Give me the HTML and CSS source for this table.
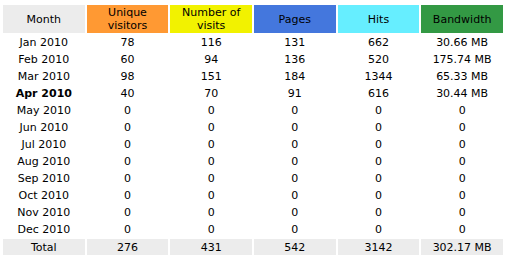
FILE: index.html
```html
<!DOCTYPE html>
<html>
<head>
<meta charset="utf-8">
<link rel="stylesheet" href="styles.css">
</head>
<body>
<table class="hist">
<thead>
<tr>
<th class="h-month">Month</th>
<th class="h-u">Unique<br>visitors</th>
<th class="h-v">Number of<br>visits</th>
<th class="h-p">Pages</th>
<th class="h-h">Hits</th>
<th class="h-k">Bandwidth</th>
</tr>
</thead>
<tbody>
<tr><td>Jan 2010</td><td>78</td><td>116</td><td>131</td><td>662</td><td>30.66 MB</td></tr>
<tr><td>Feb 2010</td><td>60</td><td>94</td><td>136</td><td>520</td><td>175.74 MB</td></tr>
<tr><td>Mar 2010</td><td>98</td><td>151</td><td>184</td><td>1344</td><td>65.33 MB</td></tr>
<tr><td class="cur">Apr 2010</td><td>40</td><td>70</td><td>91</td><td>616</td><td>30.44 MB</td></tr>
<tr><td>May 2010</td><td>0</td><td>0</td><td>0</td><td>0</td><td>0</td></tr>
<tr><td>Jun 2010</td><td>0</td><td>0</td><td>0</td><td>0</td><td>0</td></tr>
<tr><td>Jul 2010</td><td>0</td><td>0</td><td>0</td><td>0</td><td>0</td></tr>
<tr><td>Aug 2010</td><td>0</td><td>0</td><td>0</td><td>0</td><td>0</td></tr>
<tr><td>Sep 2010</td><td>0</td><td>0</td><td>0</td><td>0</td><td>0</td></tr>
<tr><td>Oct 2010</td><td>0</td><td>0</td><td>0</td><td>0</td><td>0</td></tr>
<tr><td>Nov 2010</td><td>0</td><td>0</td><td>0</td><td>0</td><td>0</td></tr>
<tr><td>Dec 2010</td><td>0</td><td>0</td><td>0</td><td>0</td><td>0</td></tr>
</tbody>
<tfoot>
<tr class="total"><td>Total</td><td>276</td><td>431</td><td>542</td><td>3142</td><td>302.17 MB</td></tr>
</tfoot>
</table>
</body>
</html>
```
FILE: styles.css
```css
html, body {
  margin: 0;
  padding: 0;
  background: #ffffff;
}
body {
  font-family: "DejaVu Sans", Verdana, sans-serif;
  font-size: 11px;
  color: #000000;
}
.hist {
  margin: 3px 0 0 1px;
  width: 504px;
  border-collapse: separate;
  border-spacing: 2px;
  table-layout: fixed;
}
.hist th, .hist td {
  padding: 1px 1px;
  line-height: 13px;
  text-align: center;
  font-weight: normal;
  white-space: nowrap;
  overflow: hidden;
}
.h-month { background: #ececec; }
.h-u { background: #ff9933; }
.h-v { background: #f2f200; }
.h-p { background: #4477dd; }
.h-h { background: #66eeff; }
.h-k { background: #339944; }
.hist td.cur { font-weight: bold; }
.total td {
  background: #ececec;
  padding: 2px 1px 1px;
}
```
